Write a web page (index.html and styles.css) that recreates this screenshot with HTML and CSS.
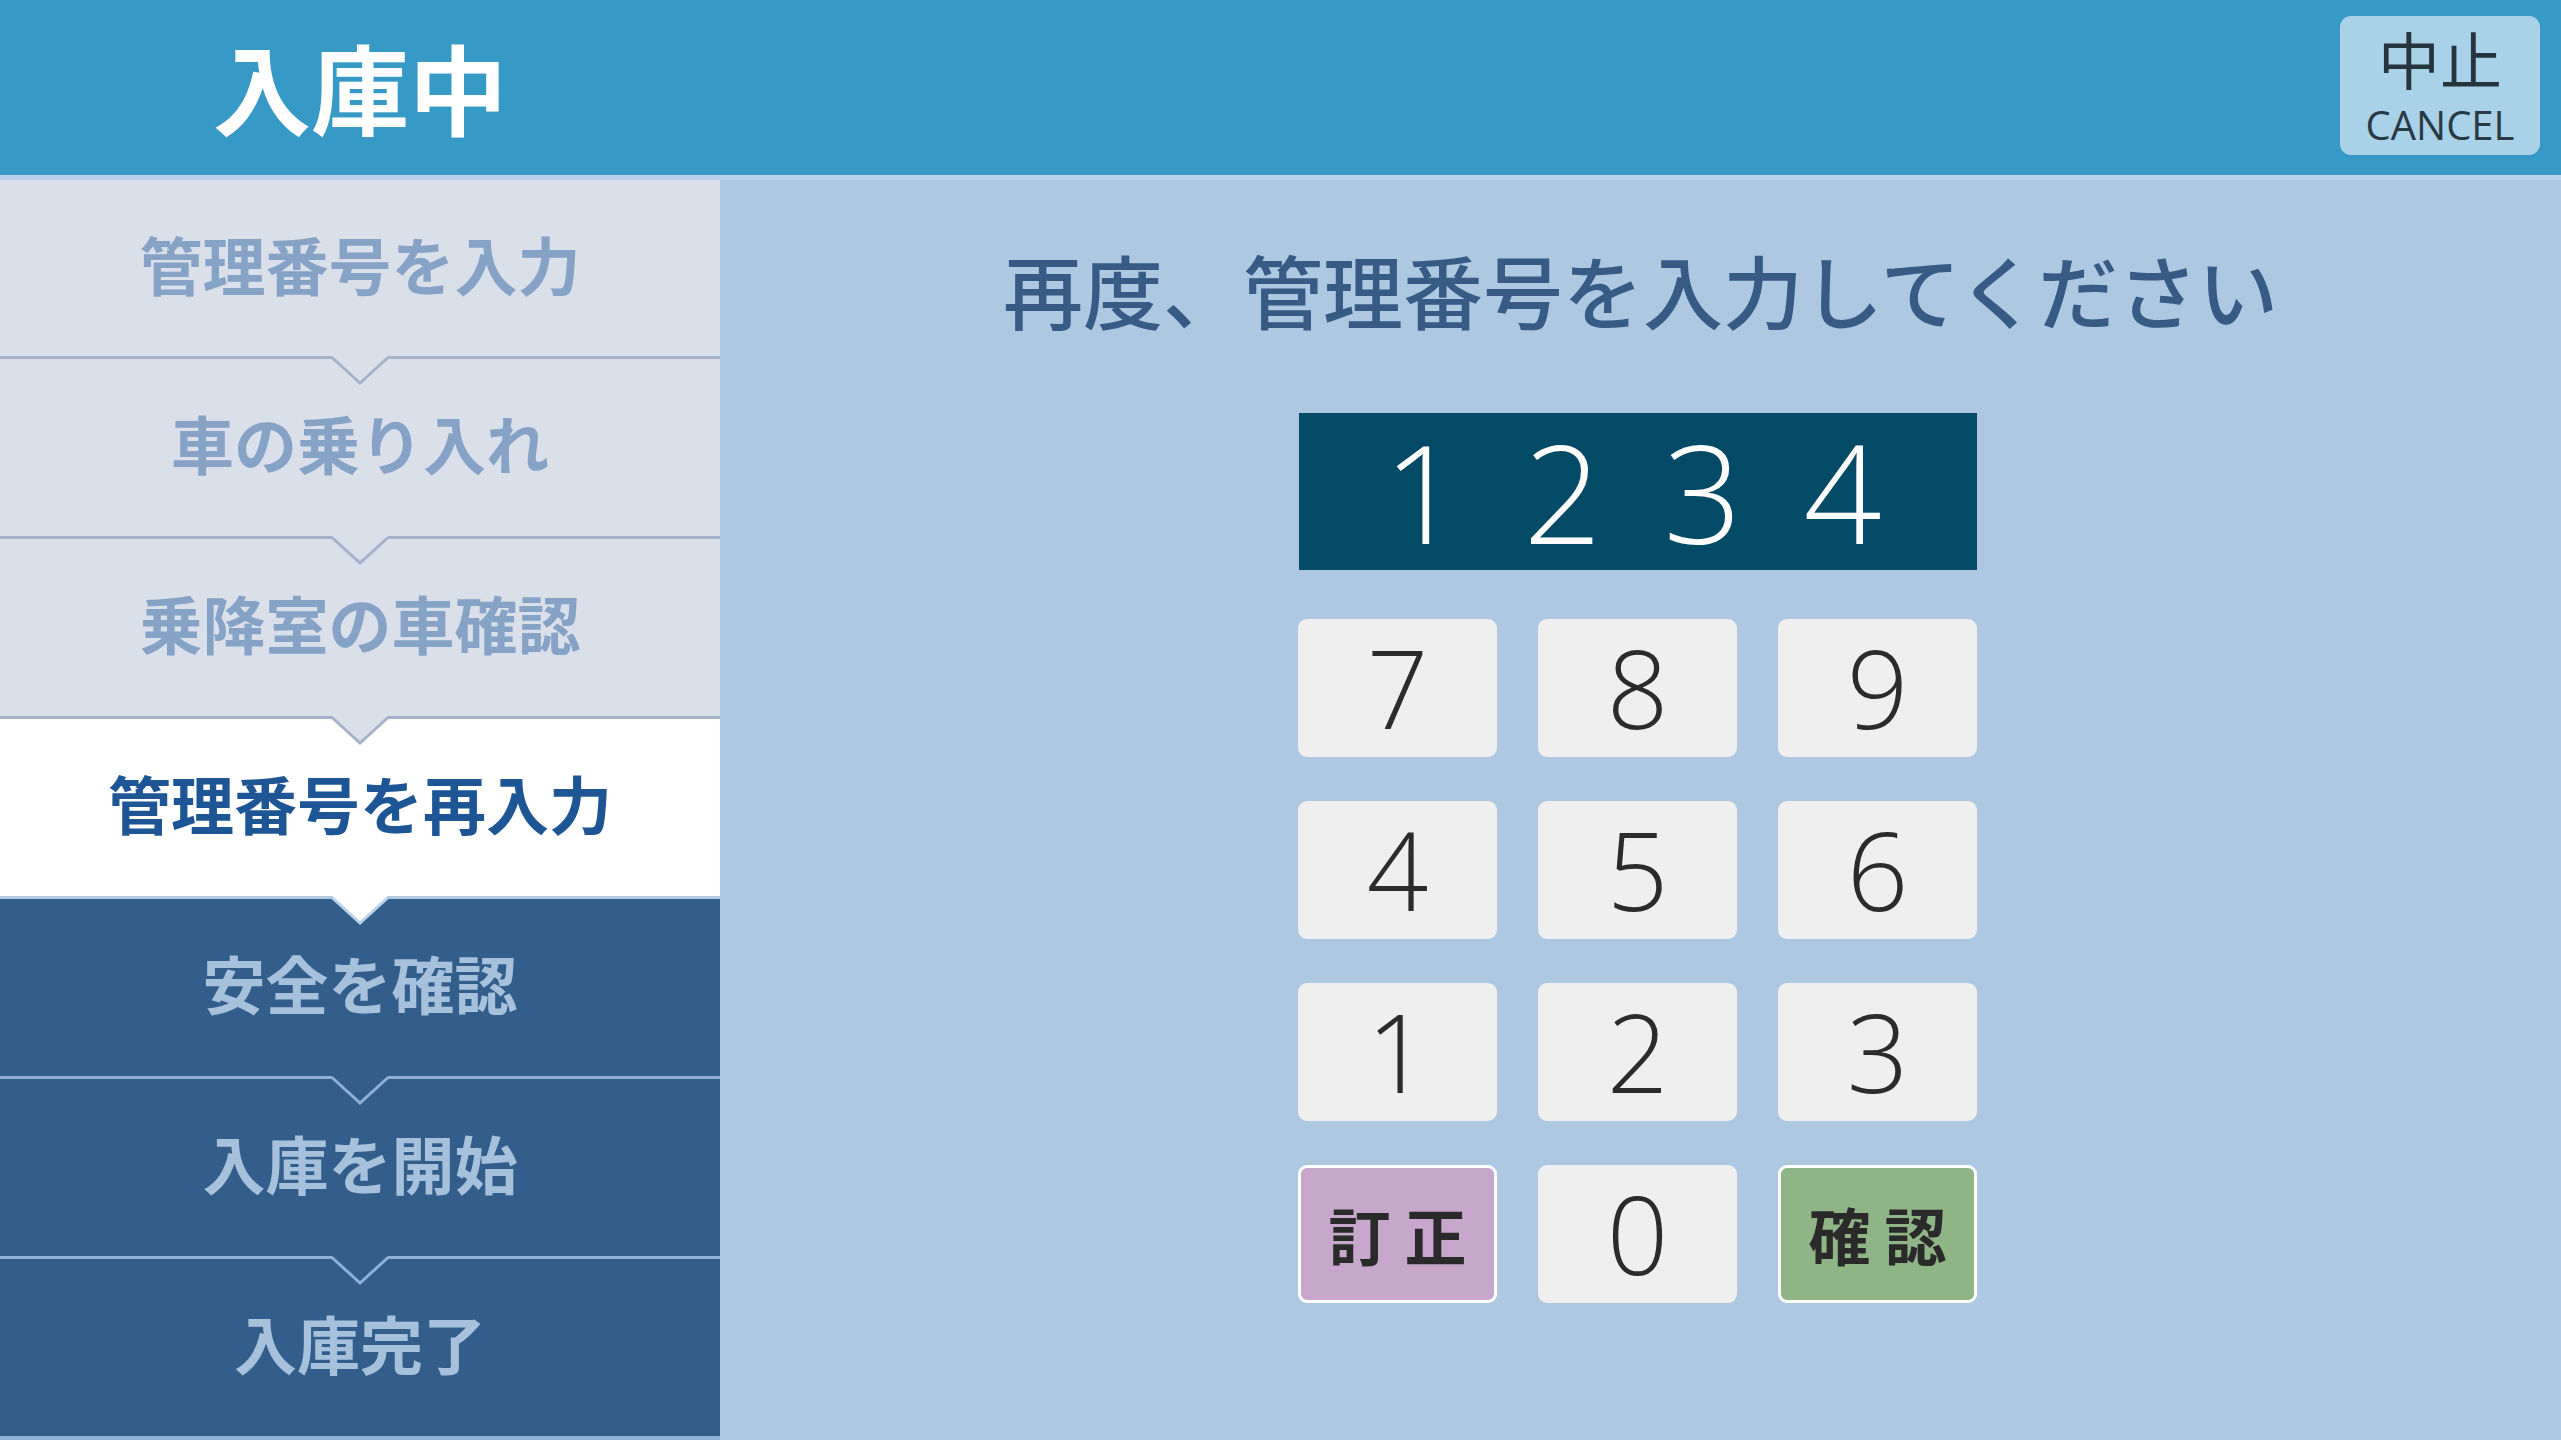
FILE: index.html
```html
<!DOCTYPE html>
<html lang="ja">
<head>
<meta charset="utf-8">
<title>入庫中</title>
<link rel="stylesheet" href="styles.css">
</head>
<body>
<div class="app">
  <header class="header">
    <div class="title">入庫中</div>
    <button class="cancel"><span class="cancel-jp">中止</span><span class="cancel-en">CANCEL</span></button>
  </header>
  <div class="content">
    <nav class="sidebar">
      <div class="step done first"><span>管理番号を入力</span></div>
      <div class="step done">
        <svg class="notch" viewBox="0 0 56 30"><polygon class="n-fill" points="0,0 56,0 28,27"/><polyline class="n-line" points="0,1.5 28,27 56,1.5"/></svg>
        <span>車の乗り入れ</span>
      </div>
      <div class="step done">
        <svg class="notch" viewBox="0 0 56 30"><polygon class="n-fill" points="0,0 56,0 28,27"/><polyline class="n-line" points="0,1.5 28,27 56,1.5"/></svg>
        <span>乗降室の車確認</span>
      </div>
      <div class="step active">
        <svg class="notch" viewBox="0 0 56 30"><polygon class="n-fill" points="0,0 56,0 28,27"/><polyline class="n-line" points="0,1.5 28,27 56,1.5"/></svg>
        <span>管理番号を再入力</span>
      </div>
      <div class="step todo after-active">
        <svg class="notch" viewBox="0 0 56 30"><polygon class="n-fill" points="0,0 56,0 28,27"/><polyline class="n-line" points="0,1.5 28,27 56,1.5"/></svg>
        <span>安全を確認</span>
      </div>
      <div class="step todo">
        <svg class="notch" viewBox="0 0 56 30"><polygon class="n-fill" points="0,0 56,0 28,27"/><polyline class="n-line" points="0,1.5 28,27 56,1.5"/></svg>
        <span>入庫を開始</span>
      </div>
      <div class="step todo">
        <svg class="notch" viewBox="0 0 56 30"><polygon class="n-fill" points="0,0 56,0 28,27"/><polyline class="n-line" points="0,1.5 28,27 56,1.5"/></svg>
        <span>入庫完了</span>
      </div>
    </nav>
    <main class="main">
      <div class="prompt">再度、管理番号を入力してください</div>
      <div class="display"><span>1</span><span>2</span><span>3</span><span>4</span></div>
      <div class="keypad">
        <button class="key">7</button>
        <button class="key">8</button>
        <button class="key">9</button>
        <button class="key">4</button>
        <button class="key">5</button>
        <button class="key">6</button>
        <button class="key">1</button>
        <button class="key">2</button>
        <button class="key">3</button>
        <button class="key fn correct">訂正</button>
        <button class="key">0</button>
        <button class="key fn confirm">確認</button>
      </div>
    </main>
  </div>
</div>
</body>
</html>
```
FILE: styles.css
```css
* { box-sizing: border-box; }
html, body {
  margin: 0;
  padding: 0;
  width: 2561px;
  height: 1440px;
  overflow: hidden;
  font-family: "Noto Sans CJK JP", "Noto Sans", sans-serif;
}
.app {
  width: 2561px;
  height: 1440px;
  display: flex;
  flex-direction: column;
  background: #aec8e2;
}
.header {
  height: 180px;
  flex: none;
  background: #3799c5;
  border-bottom: 5px solid #b6d1e9;
  display: flex;
  align-items: center;
}
.title {
  width: 720px;
  text-align: center;
  color: #ffffff;
  font-size: 98px;
  font-weight: 700;
  line-height: 1;
  padding-bottom: 6px;
}
.cancel {
  margin-left: auto;
  margin-right: 21px;
  margin-bottom: 4px;
  width: 200px;
  height: 139px;
  border: none;
  border-radius: 11px;
  background: #a9d2e8;
  display: flex;
  flex-direction: column;
  align-items: center;
  justify-content: center;
  padding: 0;
  color: #26343d;
  font-family: "Noto Sans CJK JP", sans-serif;
}
.cancel-jp {
  font-size: 62px;
  line-height: 62px;
  font-weight: 400;
}
.cancel-en {
  font-family: "Open Sans", "Noto Sans", sans-serif;
  font-size: 40px;
  line-height: 40px;
  margin-top: 16px;
  color: #2a3a44;
}
.content {
  flex: 1;
  display: flex;
  min-height: 0;
}
.sidebar {
  width: 720px;
  flex: none;
  display: flex;
  flex-direction: column;
  border-bottom: 4px solid #8fb0d5;
}
.step {
  position: relative;
  height: 180px;
  flex: none;
  display: flex;
  align-items: center;
  justify-content: center;
  font-size: 63px;
  font-weight: 700;
  line-height: 1;
  border-top: 3px solid #a5b2ca;
  --prev: #d9e0ea;
  --line: #a5b2ca;
}
.step.first {
  height: 176px;
  border-top: none;
}
.step span { display: block; padding-bottom: 12px; }
.done {
  background: #d9e0ea;
  color: #86a3c6;
}
.active {
  background: #ffffff;
  color: #1e5595;
}
.todo {
  background: #335d8b;
  color: #a7c1dd;
  border-top-color: #8fb1d7;
  --prev: #335d8b;
  --line: #8fb1d7;
}
.todo.after-active {
  border-top-color: #b4cbe3;
  --prev: #ffffff;
  --line: #bcd0e6;
}
.notch {
  position: absolute;
  top: -3px;
  left: 332px;
  width: 56px;
  height: 30px;
  overflow: visible;
}
.n-fill { fill: var(--prev); }
.n-line {
  fill: none;
  stroke: var(--line);
  stroke-width: 3;
}
.main {
  flex: 1;
  display: flex;
  flex-direction: column;
  align-items: center;
  padding-top: 58px;
  padding-right: 6px;
}
.prompt {
  font-size: 80px;
  line-height: 100px;
  font-weight: 500;
  color: #375b85;
  margin-left: 6px;
}
.display {
  margin-top: 75px;
  width: 678px;
  height: 157px;
  background: #034a66;
  display: flex;
  justify-content: center;
  align-items: center;
  color: #ffffff;
  font-family: "Open Sans", "Noto Sans", sans-serif;
  font-weight: 300;
  font-size: 137px;
  line-height: 1;
  padding-right: 10px;
}
.display span {
  width: 140px;
  text-align: center;
  display: block;
}
.keypad {
  margin-top: 49px;
  display: grid;
  grid-template-columns: repeat(3, 199px);
  grid-auto-rows: 138px;
  column-gap: 41px;
  row-gap: 44px;
}
.key {
  border: none;
  border-radius: 9px;
  background: #efefef;
  color: #2b2b2b;
  font-family: "Open Sans", "Noto Sans", sans-serif;
  font-weight: 300;
  font-size: 108px;
  line-height: 1;
  padding: 0;
  display: flex;
  align-items: center;
  justify-content: center;
}
.key.fn {
  font-family: "Noto Sans CJK JP", sans-serif;
  font-weight: 700;
  font-size: 62px;
  letter-spacing: 14px;
  text-indent: 14px;
  border: 3px solid #ffffff;
  color: #2a2a2a;
}
.correct { background: #c7a8cc; }
.confirm { background: #8fb587; }
```
